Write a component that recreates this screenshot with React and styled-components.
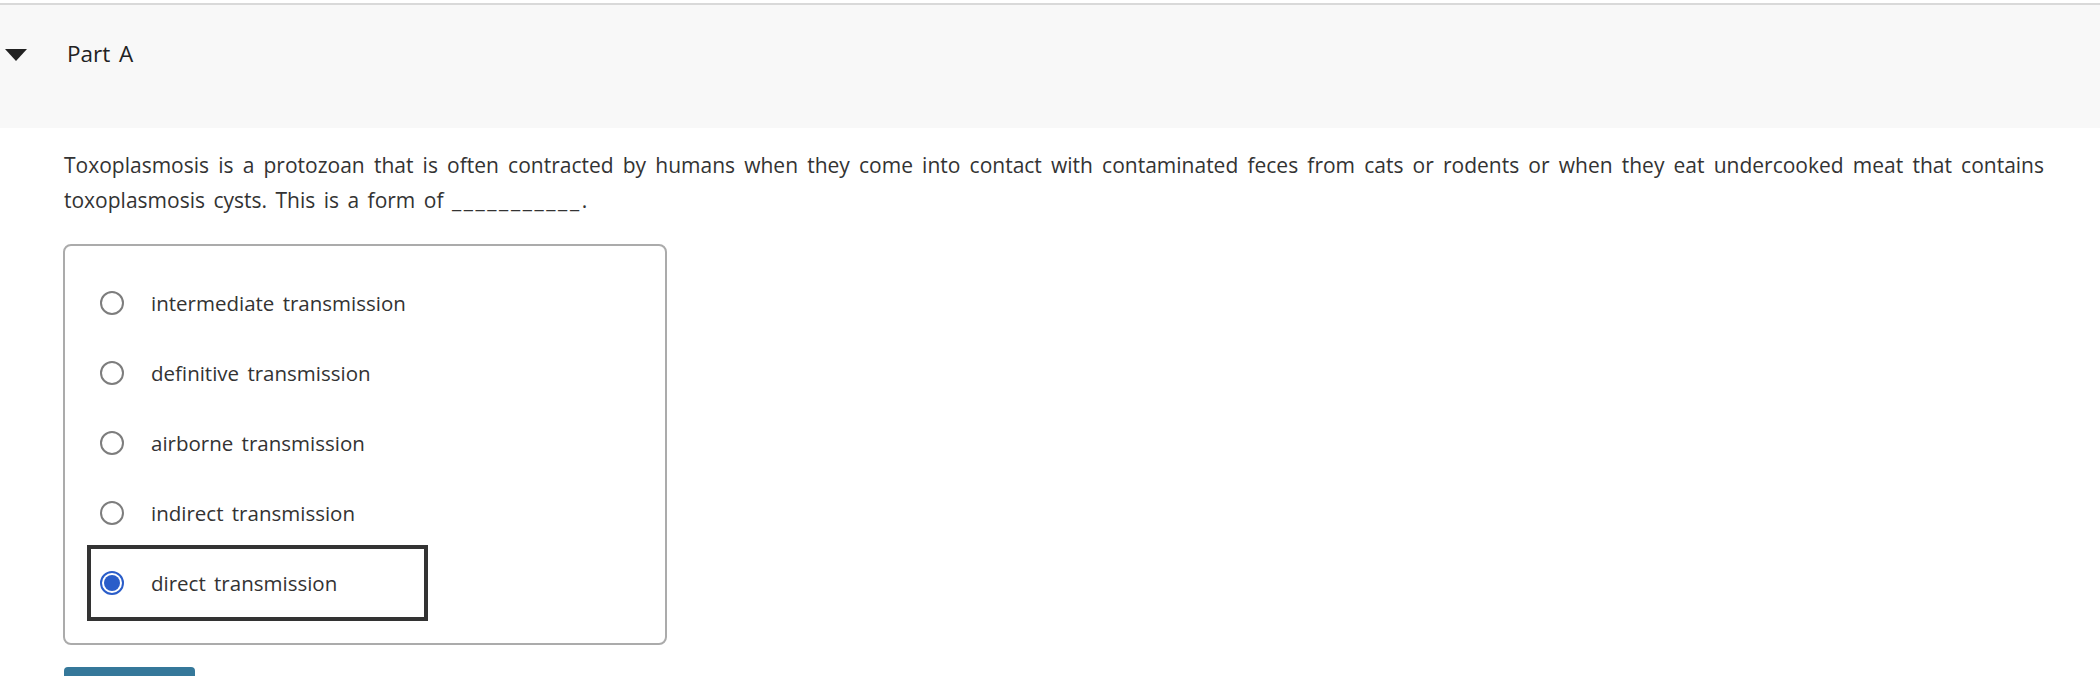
import React from 'react';
import styled, { createGlobalStyle } from "styled-components";

const GlobalStyle = createGlobalStyle`
  html, body {
    margin: 0;
    padding: 0;
    background: #fff;
  }
  body {
    font-family: "Open Sans", Lato, "Liberation Sans", sans-serif;
    color: #333;
  }
`

const Page = styled.div`
  padding-top: 3px;
`

const PartHeader = styled.div`
  display: flex;
  align-items: flex-start;
  gap: 40px;
  height: 125px;
  box-sizing: border-box;
  padding: 34px 0 61px 5px;
  background: #f8f8f8;
  border-top: 2px solid #d9d9d9;
`

const Caret = styled.span`
  width: 0;
  height: 0;
  margin-top: 10px;
  border-left: 11.5px solid transparent;
  border-right: 11.5px solid transparent;
  border-top: 12px solid #222;
`

const PartTitle = styled.h2`
  margin: 0;
  font-size: 22.5px;
  line-height: 30px;
  font-weight: 400;
  color: #222;
  word-spacing: 3px;
`

const Body = styled.div`
  padding: 20px 56px 0 64px;
`

const Question = styled.p`
  margin: 0;
  font-size: 21px;
  line-height: 35px;
  text-align: justify;
  word-spacing: 3px;
`

const Blank = styled.span`
  letter-spacing: 2.6px;
  word-spacing: 0;
`

const Choices = styled.div`
  width: 604px;
  box-sizing: border-box;
  margin: 26px 0 0 -1px;
  padding: 22px 0 25px 25px;
  border: 2px solid #ababab;
  border-radius: 8px;
  display: flex;
  flex-direction: column;
`

const Choice = styled.label`
  display: flex;
  align-items: center;
  gap: 27px;
  width: 335px;
  height: 70px;
  box-sizing: border-box;
  padding-left: 10px;
  font-size: 20.5px;
  word-spacing: 3px;
  color: #333;
  outline: ${props => props.selected ? "4px solid #333" : "none"};
  outline-offset: -1px;
`

const Radio = styled.span`
  position: relative;
  flex: none;
  width: 24px;
  height: 24px;
  box-sizing: border-box;
  border-radius: 50%;
  border: 2px solid ${props => props.checked ? "#2a5dc9" : "#7d7d7d"};
  background: #fff;
  &::after {
    content: "";
    display: ${props => props.checked ? "block" : "none"};
    position: absolute;
    left: 2px;
    top: 2px;
    width: 16px;
    height: 16px;
    border-radius: 50%;
    background: #2a5dc9;
  }
`

const SubmitButton = styled.button`
  display: block;
  margin-top: 22px;
  width: 131px;
  height: 40px;
  border: none;
  border-radius: 4px;
  background: #35789a;
  cursor: pointer;
`

const options = [
  "intermediate transmission",
  "definitive transmission",
  "airborne transmission",
  "indirect transmission",
  "direct transmission",
]

export default function App() {
  const selected = 4;
  return (
    <Page>
      <GlobalStyle />
      <PartHeader>
        <Caret />
        <PartTitle>Part A</PartTitle>
      </PartHeader>
      <Body>
        <Question>
          Toxoplasmosis is a protozoan that is often contracted by humans when they come into contact with contaminated feces from cats or rodents or when they eat undercooked meat that contains toxoplasmosis cysts. This is a form of <Blank>___________.</Blank>
        </Question>
        <Choices>
          {options.map((o, i) => (
            <Choice key={o} selected={i === selected}>
              <Radio checked={i === selected} />
              {o}
            </Choice>
          ))}
        </Choices>
        <SubmitButton aria-label="Submit" />
      </Body>
    </Page>
  );
}
